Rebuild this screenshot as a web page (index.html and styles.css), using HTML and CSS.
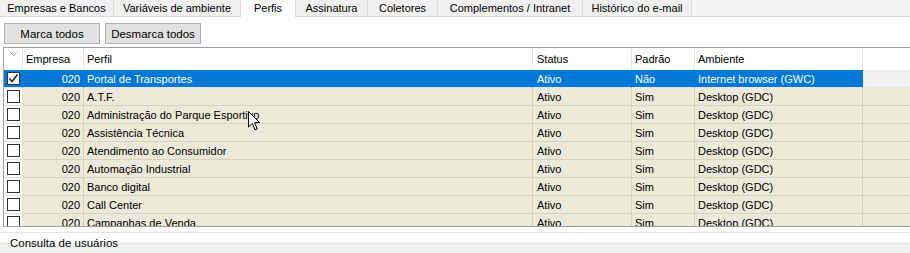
FILE: index.html
```html
<!DOCTYPE html>
<html>
<head>
	<title>Perfis</title>
	<meta charset="utf-8">
	<link rel="stylesheet" href="styles.css">
</head>
<body>

<ul class="tabs">
	<li class="tab">Empresas e Bancos</li>
	<li class="tab">Variáveis de ambiente</li>
	<li class="tab active">Perfis</li>
	<li class="tab">Assinatura</li>
	<li class="tab">Coletores</li>
	<li class="tab">Complementos / Intranet</li>
	<li class="tab">Histórico do e-mail</li>
</ul>

<div class="page">
	<div class="toolbar">
		<button class="btn">Marca todos</button>
		<button class="btn">Desmarca todos</button>
	</div>

	<div class="grid">
		<div class="row head">
			<div class="cell chk"><svg class="sort" width="7" height="4" viewBox="0 0 7 4"><path d="M0.5 0.5 L3.5 3.5 L6.5 0.5" fill="none" stroke="#9a9a9a"/></svg></div>
			<div class="cell">Empresa</div>
			<div class="cell">Perfil</div>
			<div class="cell">Status</div>
			<div class="cell">Padrão</div>
			<div class="cell">Ambiente</div>
			<div class="cell fill"></div>
		</div>
		<div class="row selected">
			<div class="cell chk"><span class="box checked"><svg width="11" height="11" viewBox="0 0 11 11"><path d="M1.5 5.5 L4 8.5 L9.5 1.5" fill="none" stroke="#222" stroke-width="1.6"/></svg></span></div>
			<div class="cell num">020</div>
			<div class="cell">Portal de Transportes</div>
			<div class="cell">Ativo</div>
			<div class="cell">Não</div>
			<div class="cell">Internet browser (GWC)</div>
			<div class="cell fill"></div>
		</div>
		<div class="row">
			<div class="cell chk"><span class="box"></span></div>
			<div class="cell num">020</div>
			<div class="cell">A.T.F.</div>
			<div class="cell">Ativo</div>
			<div class="cell">Sim</div>
			<div class="cell">Desktop (GDC)</div>
			<div class="cell fill"></div>
		</div>
		<div class="row">
			<div class="cell chk"><span class="box"></span></div>
			<div class="cell num">020</div>
			<div class="cell">Administração do Parque Esportivo</div>
			<div class="cell">Ativo</div>
			<div class="cell">Sim</div>
			<div class="cell">Desktop (GDC)</div>
			<div class="cell fill"></div>
		</div>
		<div class="row">
			<div class="cell chk"><span class="box"></span></div>
			<div class="cell num">020</div>
			<div class="cell">Assistência Técnica</div>
			<div class="cell">Ativo</div>
			<div class="cell">Sim</div>
			<div class="cell">Desktop (GDC)</div>
			<div class="cell fill"></div>
		</div>
		<div class="row">
			<div class="cell chk"><span class="box"></span></div>
			<div class="cell num">020</div>
			<div class="cell">Atendimento ao Consumidor</div>
			<div class="cell">Ativo</div>
			<div class="cell">Sim</div>
			<div class="cell">Desktop (GDC)</div>
			<div class="cell fill"></div>
		</div>
		<div class="row">
			<div class="cell chk"><span class="box"></span></div>
			<div class="cell num">020</div>
			<div class="cell">Automação Industrial</div>
			<div class="cell">Ativo</div>
			<div class="cell">Sim</div>
			<div class="cell">Desktop (GDC)</div>
			<div class="cell fill"></div>
		</div>
		<div class="row">
			<div class="cell chk"><span class="box"></span></div>
			<div class="cell num">020</div>
			<div class="cell">Banco digital</div>
			<div class="cell">Ativo</div>
			<div class="cell">Sim</div>
			<div class="cell">Desktop (GDC)</div>
			<div class="cell fill"></div>
		</div>
		<div class="row">
			<div class="cell chk"><span class="box"></span></div>
			<div class="cell num">020</div>
			<div class="cell">Call Center</div>
			<div class="cell">Ativo</div>
			<div class="cell">Sim</div>
			<div class="cell">Desktop (GDC)</div>
			<div class="cell fill"></div>
		</div>
		<div class="row">
			<div class="cell chk"><span class="box"></span></div>
			<div class="cell num">020</div>
			<div class="cell">Campanhas de Venda</div>
			<div class="cell">Ativo</div>
			<div class="cell">Sim</div>
			<div class="cell">Desktop (GDC)</div>
			<div class="cell fill"></div>
		</div>

		<!-- mouse pointer left in the shot -->
		<svg class="cursor" width="13" height="20" viewBox="0 0 13 20"><path d="M0.5 0.5 L0.5 16 L4.3 12.4 L7 18.8 L9.2 17.9 L6.6 11.6 L11.6 11.6 Z" fill="#fff" stroke="#000" stroke-linejoin="round"/></svg>
	</div>
</div>

<fieldset class="footer">
	<legend>Consulta de usuários</legend>
</fieldset>

</body>
</html>
```

FILE: styles.css
```css
body {
	margin: 0;
	width: 910px;
	height: 253px;
	overflow: hidden;
	font-family: "Liberation Sans", Arial, sans-serif;
	font-size: 11px;
	color: #000;
	background: #fff;
}
ul, li {
	margin: 0;
	padding: 0;
	list-style: none;
}
.tabs {
	display: flex;
	height: 16px;
	background: #f4f4f4;
	border-bottom: 1px solid #dadada;
}
.tab {
	box-sizing: border-box;
	height: 16px;
	line-height: 16px;
	text-align: center;
	font-size: 11px;
	background: #f0f0f0;
	border-right: 1px solid #dadada;
}
.tab:nth-child(1) { width: 114px; }
.tab:nth-child(2) { width: 127px; }
.tab:nth-child(3) { width: 55px; }
.tab:nth-child(4) { width: 72px; }
.tab:nth-child(5) { width: 70px; }
.tab:nth-child(6) { width: 145px; }
.tab:nth-child(7) { width: 109px; }
.tab.active {
	height: 17px;
	background: #fff;
	margin-bottom: -1px;
}
.page {
	padding: 6px 0 5px 3px;
	border-bottom: 1px solid #e3e3e3;
}
.toolbar {
	display: flex;
	gap: 5px;
	padding-left: 1px;
	margin-bottom: 3px;
}
.btn {
	box-sizing: border-box;
	width: 96px;
	height: 21px;
	padding: 0;
	font-family: "Liberation Sans", Arial, sans-serif;
	font-size: 11.5px;
	color: #000;
	background: #e1e1e1;
	border: 1px solid #adadad;
}
.grid {
	position: relative;
	height: 178px;
	overflow: hidden;
	border-top: 1px solid #a0a0a0;
	border-bottom: 1px solid #a0a0a0;
	border-left: 1px solid #a0a0a0;
}
.row {
	display: grid;
	grid-template-columns: 19px 61px 449px 99px 63px 168px 1fr;
	height: 18px;
	line-height: 18px;
	background: #ece9d8;
}
.cell {
	box-sizing: border-box;
	padding: 0 3px;
	white-space: nowrap;
	overflow: hidden;
	border-right: 1px solid #d6d2c2;
	border-bottom: 1px solid #d6d2c2;
}
.cell:nth-child(4) {
	padding-left: 4px;
}
.cell.num {
	text-align: right;
}
.cell.chk {
	display: flex;
	align-items: center;
	justify-content: center;
	padding: 0;
	background: #fff;
	border-color: #e0e0e0;
}
.cell.fill {
	border-right: 0;
}
.row.head {
	height: 22px;
	line-height: 23px;
	background: #fff;
}
.row.head .cell {
	border-bottom: 0;
	border-color: #e5e5e5;
}
.row.head .chk {
	align-items: flex-start;
	padding-top: 4px;
}
.row.selected {
	color: #fff;
	background: #0078d7;
}
.row.selected .cell {
	border-right-color: #0078d7;
	border-bottom-color: #e6e6e6;
}
.row.selected .chk {
	background: #0078d7;
}
.row.selected .fill {
	background: #f0f0f0;
}
.box {
	box-sizing: border-box;
	display: block;
	width: 13px;
	height: 13px;
	margin-top: -1px;
	background: #fff;
	border: 1px solid #333;
}
.box svg {
	display: block;
}
.cursor {
	position: absolute;
	left: 244px;
	top: 63px;
}
.footer {
	margin: 3px 0 0;
	padding: 0;
	height: 16px;
	background: #f0f0f0;
	border: 0;
	border-top: 1px solid #dcdcdc;
}
.footer legend {
	margin-left: 8px;
	padding: 0 2px;
	line-height: 14px;
	font-size: 11.5px;
}
```
